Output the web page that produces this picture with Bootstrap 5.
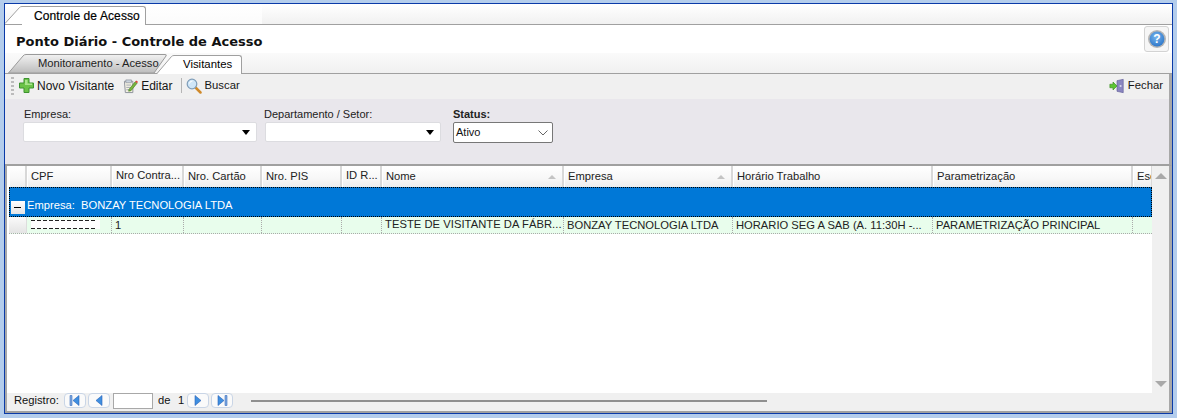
<!DOCTYPE html>
<html lang="pt">
<head>
<meta charset="utf-8">
<link href="https://cdn.jsdelivr.net/npm/bootstrap@5.3.0/dist/css/bootstrap.min.css" rel="stylesheet">
<style>
html,body{margin:0;height:418px;overflow:hidden;background:#b9d1ea}
body{font-family:"Liberation Sans",Arial,sans-serif;font-size:12px;color:#111;line-height:1}
.win{height:418px;padding:3px 4px 4px 4px;background:#b4cdec}
.pane{height:411px;border:1px solid #0a3aa8;background:#fff;width:1169px}
.pane>*{flex:none}
.strip1{height:21px;background:linear-gradient(#fff,#f1f1f1);border-bottom:1px solid #a0a0a0}
.tabslant{flex:none;display:block;margin-bottom:-1px}
.tabbody{background:#fff;border:1px solid #a0a0a0;border-left:0;border-bottom:0;border-radius:0 3px 0 0;height:19px;margin-bottom:-1px;align-self:flex-end;padding:3px 5px 0 0;color:#000}
.t1{width:124px;padding-left:12px;letter-spacing:.1px;-webkit-text-stroke:.2px #000}
.whitegap{width:116px;height:20px;background:linear-gradient(#fff,#fbfbfb)}
.titlebar{height:28px;background:#fff;padding:0 0 0 11px}
.titlebar h1{font:bold 13px "DejaVu Sans",Verdana,sans-serif;margin:0;padding-top:9px;color:#111}
.helpbtn{width:25px;height:26px;border:1px solid #d3d3d3;border-radius:3px;background:#f6f6f6;margin:1px 3px 0 0}
.strip2{height:21px;background:linear-gradient(#fafafa,#f0f0f0);border-bottom:1px solid #a0a0a0;padding-left:3px;align-items:flex-end}
.subtab-a{height:19px;width:160px;padding:4px 0 0 30px;color:#222;white-space:nowrap;font-size:11.2px;flex:none}
.subtab-shape{left:0;top:0}
.subtab-a span{position:relative}
.subtab-b{margin-left:-11px;z-index:1}
.t2{width:68px;padding-left:9px;font-size:11.4px;padding-top:3px}
.toolbar{height:25px;background:#f0f0f0;padding:0 2px 2px 6px;border-right:3px solid #a8a8a8}
.grip{width:3px;height:18px;margin:0 5px 0 0;background:repeating-linear-gradient(#bbb 0 2px,transparent 2px 4px)}
.tbi{gap:3px;white-space:nowrap;color:#161616}
.tbi.sm{font-size:11.3px}
.ed{margin-left:9px}
.sep{width:1px;height:15px;background:#b5b5b5;margin:0 4px 0 8px}
.filters{height:67px;background:#e9e7ec;border-bottom:2px solid #a0a0a0;border-right:3px solid #a8a8a8;padding:10px 0 0 18px;font-size:11px}
.fg{flex:none}
.fg label{display:block;margin:0 0 2px 1px;color:#222;height:11px}
.fg label.nudge{margin-left:-1px}
.fg label.nudge0{margin-left:0}
.cmb{height:20px;background:#fff;border:1px solid #dcdce0;border-radius:2px;position:relative}
.cmb i{position:absolute;right:6px;top:7px;border:4px solid transparent;border-top:5px solid #000;border-bottom:0}
.cmb2{height:21px;border:1px solid #777;background:#fff;border-radius:2px;width:100px;padding:4px 0 0 2px}
.chev{right:4px;top:7px}
.f1{width:242px}.c1{width:234px}.f2{width:188px}.c2{width:176px}
.gridwrap{height:227px;background:#fff;padding-left:2px;border-left:2px solid #a8a8a8;border-right:3px solid #a8a8a8;font-size:11.2px}
.gridmain{width:1143px;overflow:hidden;flex:none}
.hdr{height:21px;background:linear-gradient(#fff 0,#f7f7f7 60%,#ececec 100%)}
.hc{flex:none;height:21px;border-right:2px solid #d8d8d8;border-left:1px solid #fff;padding:5px 0 0 3px;white-space:nowrap;overflow:hidden;color:#222;position:relative}
.hc.up{padding-top:4px}
.w0{width:18px;padding:0}
.w1{width:85px}.w2{width:72px}.w3{width:78px}.w4{width:80px}.w5{width:40px}.w6{width:182px}.w7{width:169px}.w8{width:200px}.w9{width:200px}.w10{width:20px}
.sorta{position:absolute;right:6px;top:9px;border:4px solid transparent;border-bottom:4px solid #c4c4c4;border-top:0}
.grp{height:30px;background:#0078d7;color:#fff;outline:1px dotted #000;outline-offset:-1px;padding:0 0 0 2px;align-items:flex-end;display:flex;white-space:pre;font-size:11.2px}
.minus{width:14px;height:13px;background:linear-gradient(#fff,#e4e4e4);margin:0 2px 3px 0;position:relative;flex:none}
.minus::after{content:"";position:absolute;left:3px;top:6px;width:7px;height:1px;background:#000}
.grptxt{padding-bottom:6px}
.datarow{height:17px;background:#e8fdec;border-bottom:1px dotted #aaa}
.dc{flex:none;height:16px;border-right:1px dotted #aaa;padding:3px 0 0 3px;white-space:nowrap;overflow:hidden;color:#222}
.dc.nome{padding-top:2px;letter-spacing:.05px}
.dc.cpf{padding:2px 0 0 4px}
.sel{background:linear-gradient(#fafafa,#e4e4e4);border-right:1px solid #ddd;padding:0}
.mask{display:block;width:69px;height:9px;margin:1px 0 0 0;background:
 repeating-linear-gradient(90deg,#222 0 4px,transparent 4px 6px) 0 0/65px 1px no-repeat,
 repeating-linear-gradient(90deg,#222 0 4px,transparent 4px 6px) 0 8px/65px 1px no-repeat,#fff}
.vs{width:17px;flex:none;background:#f0f0f0;padding:7px 0 6px}
.arr-u{border:6px solid transparent;border-bottom:6px solid #a9a9a9;border-top:0}
.arr-d{border:6px solid transparent;border-top:6px solid #a9a9a9;border-bottom:0}
.pager{height:18px;background:#f0f0f0;padding:0 0 3px 7px;border-left:2px solid #a8a8a8;border-right:3px solid #a8a8a8;font-size:11.2px}
.lb{width:50px}.lde{width:20px}.lum{width:9px}
.pb{width:22px;height:15px;flex:none;border:1px solid #c9d5e6;border-radius:4px;background:#fafafa;margin-right:2px;display:flex;align-items:center;justify-content:center;padding:0}
.pinp{width:40px;height:16px;border:1px solid #a8a8a8;background:#fff;margin:0 5px 0 1px}
.track{width:516px;height:2px;background:#8f8f8f;margin-left:16px}
.bottomline{height:2px;background:#a0a0a0}
</style>
</head>
<body>
<div class="win">
 <div class="pane d-flex flex-column">
  <div class="strip1 d-flex">
   <svg class="tabslant" width="17" height="20" viewBox="0 0 17 20"><path d="M0 20 L15 3 Q16 2 17 2 L17 20Z" fill="#fff"/><path d="M0 19.5 L14.500 3.500 Q15.500 2.500 17 2.500" fill="none" stroke="#a0a0a0"/></svg>
   <div class="tabbody t1">Controle de Acesso</div>
   <div class="whitegap"></div>
  </div>
  <div class="titlebar d-flex justify-content-between align-items-start">
   <h1>Ponto Diário - Controle de Acesso</h1>
   <div class="helpbtn d-flex align-items-center justify-content-center">
    <svg width="20" height="20" viewBox="0 0 20 20"><defs><radialGradient id="hb" cx=".45" cy=".35" r=".7"><stop offset="0" stop-color="#78b6ee"/><stop offset="1" stop-color="#2a74c8"/></radialGradient></defs><circle cx="10" cy="10" r="9" fill="#b5b5b5"/><circle cx="10" cy="10" r="7.400" fill="url(#hb)"/><text x="10" y="14" text-anchor="middle" font-family="Liberation Sans" font-weight="700" font-size="12" fill="#fff">?</text></svg>
   </div>
  </div>
  <div class="strip2 d-flex">
   <div class="subtab-a position-relative">
    <svg class="subtab-shape position-absolute" width="160" height="19" viewBox="0 0 160 19"><defs><linearGradient id="sg" x1="0" y1="0" x2="0" y2="1"><stop offset="0" stop-color="#f2f2f2"/><stop offset="1" stop-color="#bcbcbc"/></linearGradient></defs><path d="M.5 19 L15 2 Q16 .5 18 .5 H157 Q159 .5 158 2 L146 19Z" fill="url(#sg)" stroke="#9a9a9a"/></svg>
    <span>Monitoramento - Acesso</span>
   </div>
   <svg class="tabslant subtab-b" width="17" height="20" viewBox="0 0 17 20"><path d="M0 20 L15 2 Q16 1 17 1 L17 20Z" fill="#fff"/><path d="M0 19.5 L14.500 2.500 Q15.500 1.500 17 1.500" fill="none" stroke="#a0a0a0"/></svg>
   <div class="tabbody t2">Visitantes</div>
  </div>
  <div class="toolbar d-flex align-items-center">
   <span class="grip"></span>
   <div class="tbi d-flex align-items-center">
    <svg width="15" height="15" viewBox="0 0 15 15"><path d="M5 .5h5v4.500h4.500v5H10v4.500H5V10H.5V5H5Z" fill="#6cc349" stroke="#3d9330"/><path d="M6 2h2.500v3.500H13V7H6Z" fill="#a9e58d"/></svg>
    <span>Novo Visitante</span>
   </div>
   <div class="tbi ed d-flex align-items-center">
    <svg width="15" height="16" viewBox="0 0 16 16"><path d="M1.500 3h9v12h-8Z" fill="#f4f1e4" stroke="#8a8f99"/><path d="M3 1.500h6v3H3Z" fill="#c9d2dd" stroke="#8a8f99" stroke-width=".7"/><path d="M3.500 7h5M3.500 9.500h4M3.500 12h4" stroke="#a0a7b0"/><path d="M6.500 11.500 13 3.500l2 1.500L8.500 13 6 13.500Z" fill="#7bb63f" stroke="#4a7f22" stroke-width=".7"/><path d="M13 3.500l1-1.500 2 1.500-1 1.500Z" fill="#e0463a"/></svg>
    <span>Editar</span>
   </div>
   <span class="sep"></span>
   <div class="tbi sm d-flex align-items-center">
    <svg width="16" height="16" viewBox="0 0 16 16"><path d="M9.500 9.500 14.500 14.500" stroke="#d08a2a" stroke-width="2.500" stroke-linecap="round"/><circle cx="6" cy="6" r="4.800" fill="#cfe6f8" stroke="#7f9db8" stroke-width="1.200"/><path d="M3.500 5.500a3 3 0 0 1 3-2.500" stroke="#fff" fill="none"/></svg>
    <span>Buscar</span>
   </div>
   <div class="tbi sm d-flex align-items-center ms-auto me-1">
    <svg width="16" height="16" viewBox="0 0 18 16"><path d="M9 2l7-1.500v15L9 14Z" fill="#8a86c0" stroke="#5f5c96" stroke-width=".7"/><path d="M12 7h2v2h-2Z" fill="#dcdcf0"/><path d="M1 6h3.500V3.500L9 8l-4.500 4.500V10H1Z" fill="#5cc534" stroke="#36891c" stroke-width=".7"/></svg>
    <span>Fechar</span>
   </div>
  </div>
  <div class="filters d-flex">
   <div class="fg f1"><label>Empresa:</label><div class="cmb c1"><i></i></div></div>
   <div class="fg f2"><label class="nudge">Departamento / Setor:</label><div class="cmb c2"><i></i></div></div>
   <div class="fg"><label class="fw-bold nudge0">Status:</label>
    <div class="cmb2 position-relative">Ativo<svg class="chev position-absolute" width="10" height="6" viewBox="0 0 10 6"><path d="M.5.5 5 5 9.500.5" fill="none" stroke="#666"/></svg></div>
   </div>
  </div>
  <div class="gridwrap d-flex">
   <div class="gridmain">
    <div class="hdr d-flex">
     <div class="hc w0"></div>
     <div class="hc w1">CPF</div>
     <div class="hc up w2">Nro Contra...</div>
     <div class="hc w3">Nro. Cartão</div>
     <div class="hc w4">Nro. PIS</div>
     <div class="hc up w5">ID R...</div>
     <div class="hc w6">Nome<i class="sorta"></i></div>
     <div class="hc w7">Empresa<i class="sorta"></i></div>
     <div class="hc w8">Horário Trabalho</div>
     <div class="hc w9">Parametrização</div>
     <div class="hc w10">Esc</div>
    </div>
    <div class="grp"><span class="minus"></span><span class="grptxt">Empresa:  BONZAY TECNOLOGIA LTDA</span></div>
    <div class="datarow d-flex">
     <div class="dc sel w0"></div>
     <div class="dc cpf w1"><span class="mask"></span></div>
     <div class="dc w2">1</div>
     <div class="dc w3"></div>
     <div class="dc w4"></div>
     <div class="dc w5"></div>
     <div class="dc nome w6">TESTE DE VISITANTE DA FÁBR...</div>
     <div class="dc w7">BONZAY TECNOLOGIA LTDA</div>
     <div class="dc w8">HORARIO SEG A SAB (A. 11:30H -...</div>
     <div class="dc w9">PARAMETRIZAÇÃO PRINCIPAL</div>
     <div class="dc w10"></div>
    </div>
   </div>
   <div class="vs d-flex flex-column align-items-center justify-content-between">
    <span class="arr-u"></span><span class="arr-d"></span>
   </div>
  </div>
  <div class="pager d-flex align-items-center">
   <span class="lb">Registro:</span>
   <button class="pb" aria-label="Primeiro"><svg width="12" height="11" viewBox="0 0 12 11"><path d="M1 .5h2v10H1Z" fill="#7fa9e0" stroke="#3b6fc0" stroke-width=".6"/><path d="M10 .5v10L4 5.500Z" fill="#3f8fe0" stroke="#2a62b8" stroke-width=".6"/></svg></button>
   <button class="pb" aria-label="Anterior"><svg width="8" height="11" viewBox="0 0 8 11"><path d="M7 .5v10L1 5.500Z" fill="#3f8fe0" stroke="#2a62b8" stroke-width=".6"/></svg></button>
   <span class="pinp"></span>
   <span class="lde">de</span>
   <span class="lum">1</span>
   <button class="pb" aria-label="Próximo"><svg width="8" height="11" viewBox="0 0 8 11"><path d="M1 .5v10L7 5.500Z" fill="#3f8fe0" stroke="#2a62b8" stroke-width=".6"/></svg></button>
   <button class="pb" aria-label="Último"><svg width="12" height="11" viewBox="0 0 12 11"><path d="M9 .5h2v10H9Z" fill="#7fa9e0" stroke="#3b6fc0" stroke-width=".6"/><path d="M2 .5v10L8 5.500Z" fill="#3f8fe0" stroke="#2a62b8" stroke-width=".6"/></svg></button>
   <span class="track"></span>
  </div>
  <div class="bottomline"></div>
 </div>
</div>
</body>
</html>
